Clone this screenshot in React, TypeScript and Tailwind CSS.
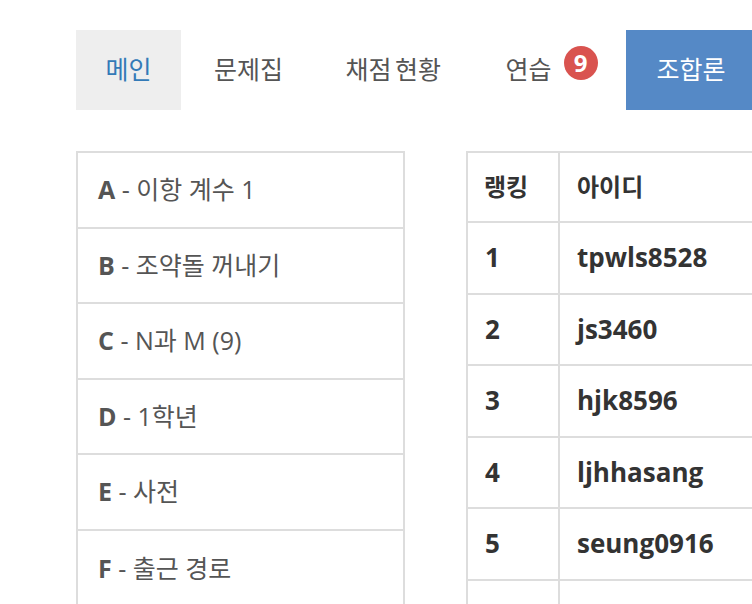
import React from "react";

const font = { fontFamily: '"Open Sans", "Noto Sans CJK KR", sans-serif' };

const problems = [
  ["A", "이항 계수 1"],
  ["B", "조약돌 꺼내기"],
  ["C", "N과 M (9)"],
  ["D", "1학년"],
  ["E", "사전"],
  ["F", "출근 경로"],
];

const ranks = [
  ["1", "tpwls8528"],
  ["2", "js3460"],
  ["3", "hjk8596"],
  ["4", "ljhhasang"],
  ["5", "seung0916"],
  ["", ""],
];

export default function App() {
  return (
    <div className="w-[752px] h-[604px] overflow-hidden bg-white" style={font}>
      <div className="pl-[76px] pt-[30px]">
        <nav className="flex gap-[3.5px] h-[80px] text-[25px] text-[#555] whitespace-nowrap">
          <div className="flex items-center px-[29.5px] bg-[#eeeeee] text-[#337ab7]">메인</div>
          <div className="flex items-center px-[29.5px]">문제집</div>
          <div className="flex items-center px-[29.5px] [word-spacing:-3px]">채점 현황</div>
          <div className="flex items-center pl-[31.5px] pr-[25px]">
            연습
            <span className="ml-[12px] -mt-[14px] flex items-center justify-center w-[34px] h-[34px] rounded-full bg-[#d9534f] text-white font-bold text-[24px]">
              9
            </span>
          </div>
          <div className="flex items-center px-[30.5px] bg-[#5589c6] text-white">조합론</div>
        </nav>
        <div className="flex mt-[41px] gap-[61px]">
          <div className="w-[329px] shrink-0 border-2 border-[#dddddd]">
            {problems.map(([l, t], i) => (
              <div
                key={l}
                className={`h-[75.6px] flex items-center pl-[20px] text-[25px] text-[#555] ${i < problems.length - 1 ? "border-b-2 border-[#dddddd]" : ""}`}
              >
                <span className="font-bold">{l}</span>
                <span>&nbsp;- {t}</span>
              </div>
            ))}
          </div>
          <div className="shrink-0 w-[400px] border-l-2 border-t-2 border-[#dddddd] text-[#333] text-[26px] font-bold">
            <div className="flex h-[70px] border-b-2 border-[#dddddd] text-[24px]">
              <div className="w-[92px] border-r-2 border-[#dddddd] flex items-center pl-[16px]">랭킹</div>
              <div className="flex-1 flex items-center pl-[17px]">아이디</div>
            </div>
            {ranks.map(([r, id], i) => (
              <div key={i} className="flex h-[71.5px] border-b-2 border-[#dddddd]">
                <div className="w-[92px] border-r-2 border-[#dddddd] flex items-center pl-[17px]">{r}</div>
                <div className="flex-1 flex items-center pl-[17px]">{id}</div>
              </div>
            ))}
          </div>
        </div>
      </div>
    </div>
  );
}
